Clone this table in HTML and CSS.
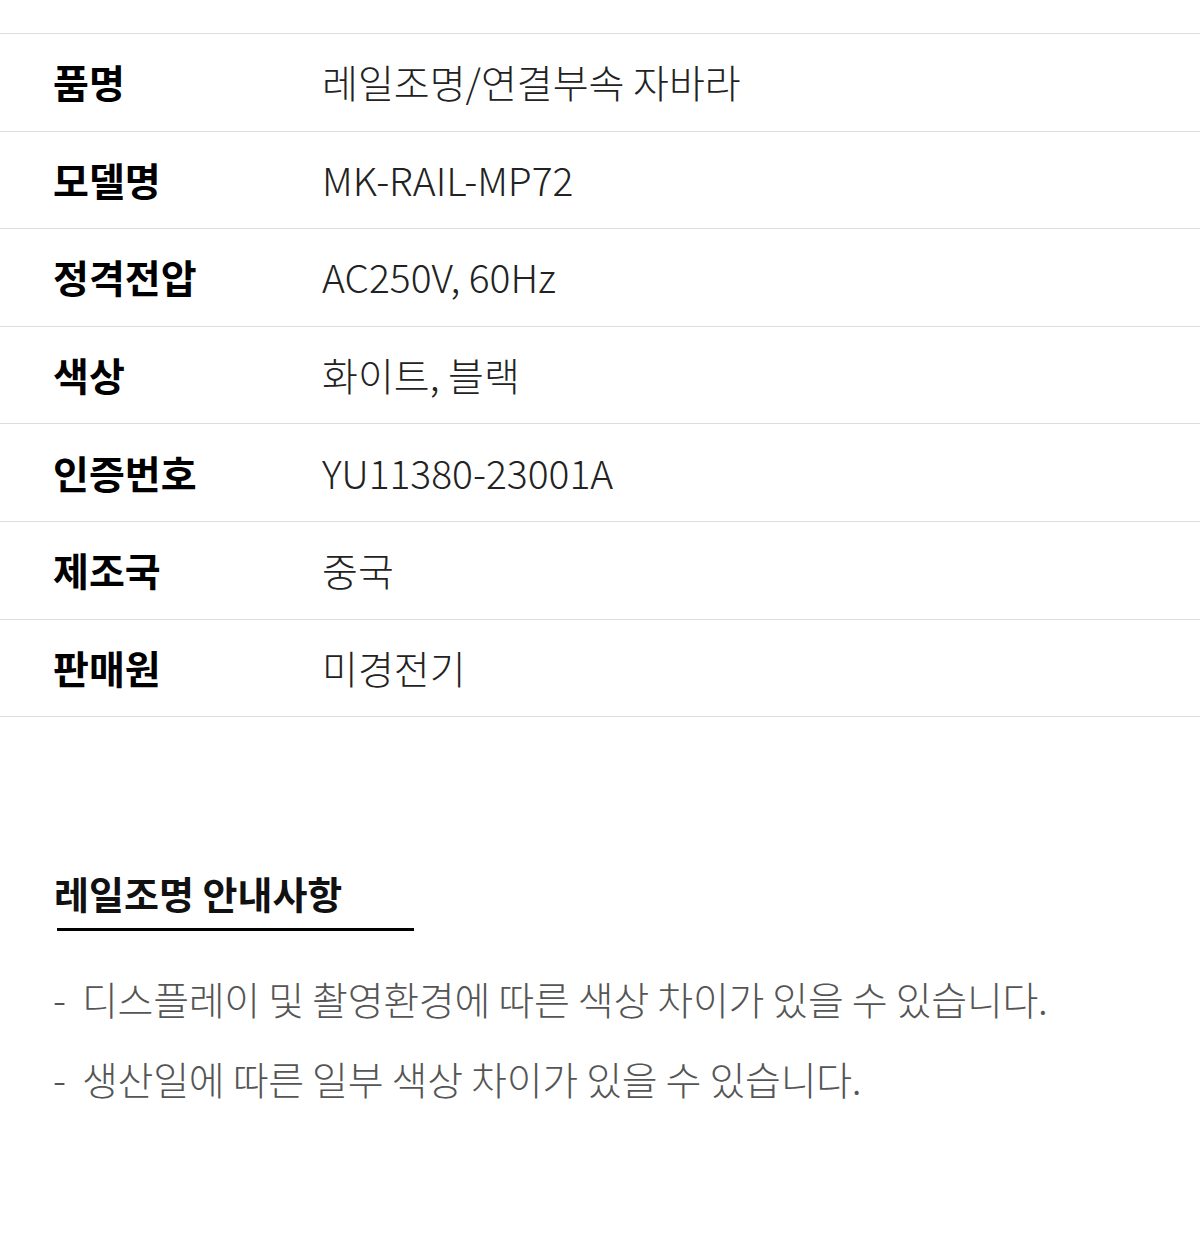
FILE: index.html
```html
<!DOCTYPE HTML>
<html>
<head>
    <title>레일조명 자바라 상품정보</title>
    <meta charset="utf-8">
    <link rel="stylesheet" href="styles.css">
</head>
<body>
    <div class="specTable">
        <div class="specRow">
            <div class="specLabel">품명</div>
            <div class="specValue">레일조명/연결부속 자바라</div>
        </div>
        <div class="specRow">
            <div class="specLabel">모델명</div>
            <div class="specValue">MK-RAIL-MP72</div>
        </div>
        <div class="specRow">
            <div class="specLabel">정격전압</div>
            <div class="specValue">AC250V, 60Hz</div>
        </div>
        <div class="specRow">
            <div class="specLabel">색상</div>
            <div class="specValue">화이트, 블랙</div>
        </div>
        <div class="specRow">
            <div class="specLabel">인증번호</div>
            <div class="specValue">YU11380-23001A</div>
        </div>
        <div class="specRow">
            <div class="specLabel">제조국</div>
            <div class="specValue">중국</div>
        </div>
        <div class="specRow">
            <div class="specLabel">판매원</div>
            <div class="specValue">미경전기</div>
        </div>
    </div>

    <div class="notice">
        <h2 class="noticeTitle">레일조명 안내사항</h2>
        <ul class="noticeList">
            <li><span class="dash">-</span>디스플레이 및 촬영환경에 따른 색상 차이가 있을 수 있습니다.</li>
            <li><span class="dash">-</span>생산일에 따른 일부 색상 차이가 있을 수 있습니다.</li>
        </ul>
    </div>
</body>
</html>
```

FILE: styles.css
```css
* {
    box-sizing: border-box;
}

body {
    margin: 0;
    padding: 0;
    background: #fff;
    font-family: "Noto Sans CJK KR", "Noto Sans", sans-serif;
}

.specTable {
    margin-top: 33px;
    border-top: 1px solid #dddddd;
}

.specRow {
    display: flex;
    align-items: center;
    height: 97.6px;
    padding-bottom: 2px;
    border-bottom: 1px solid #dddddd;
    font-size: 39px;
}

.specLabel {
    width: 322px;
    padding-left: 53px;
    font-weight: 700;
    color: #000;
}

.specValue {
    font-weight: 300;
    color: #222;
}

.notice {
    padding: 150px 0 0 57px;
}

.noticeTitle {
    width: 357px;
    margin: 0;
    padding-bottom: 9px;
    border-bottom: 3px solid #000;
    font-size: 38px;
    font-weight: 700;
    line-height: 52px;
    text-indent: -3px;
    color: #111;
}

.noticeList {
    list-style: none;
    margin: 27px 0 0 -4px;
    padding: 0;
}

.noticeList li {
    font-size: 39px;
    font-weight: 300;
    line-height: 80px;
    letter-spacing: -0.3px;
    color: #555;
}

.dash {
    display: inline-block;
    width: 29px;
}
```
